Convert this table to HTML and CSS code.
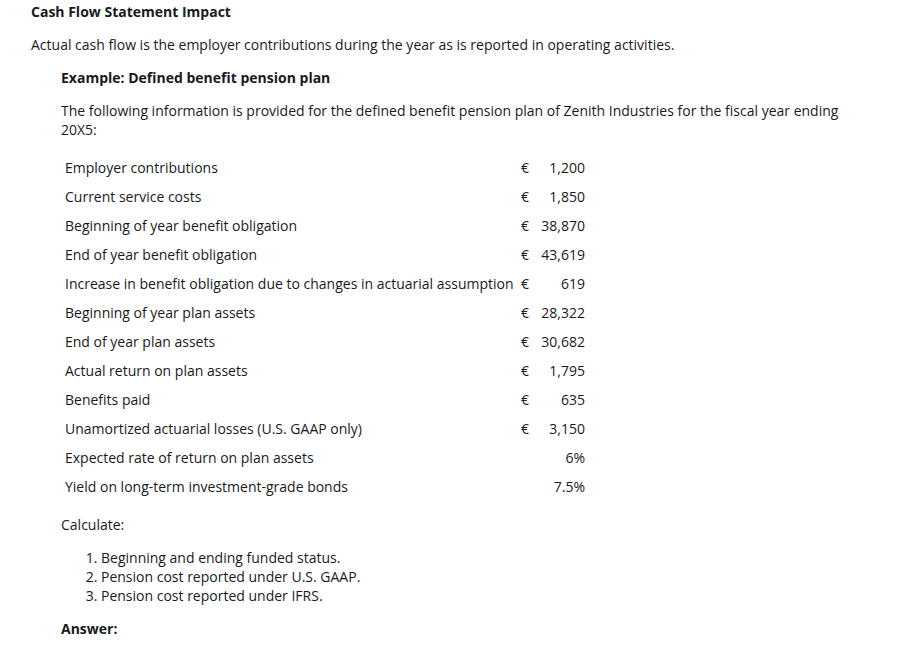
FILE: index.html
```html
<!DOCTYPE html>
<html lang="en">
<head>
<meta charset="utf-8">
<title>Cash Flow Statement Impact</title>
<link rel="stylesheet" href="styles.css">
</head>
<body>
<div class="page">
  <h2 class="title">Cash Flow Statement Impact</h2>
  <p class="lead">Actual cash flow is the employer contributions during the year as is reported in operating activities.</p>
  <section class="example">
    <h3 class="ex-title">Example: Defined benefit pension plan</h3>
    <p class="intro">The following information is provided for the defined benefit pension plan of Zenith Industries for the fiscal year ending 20X5:</p>
    <table class="data">
      <colgroup><col class="c-label"><col class="c-cur"><col class="c-num"></colgroup>
      <tbody>
        <tr><td>Employer contributions</td><td class="cur">€</td><td class="num">1,200</td></tr>
        <tr><td>Current service costs</td><td class="cur">€</td><td class="num">1,850</td></tr>
        <tr><td>Beginning of year benefit obligation</td><td class="cur">€</td><td class="num">38,870</td></tr>
        <tr><td>End of year benefit obligation</td><td class="cur">€</td><td class="num">43,619</td></tr>
        <tr><td>Increase in benefit obligation due to changes in actuarial assumption</td><td class="cur">€</td><td class="num">619</td></tr>
        <tr><td>Beginning of year plan assets</td><td class="cur">€</td><td class="num">28,322</td></tr>
        <tr><td>End of year plan assets</td><td class="cur">€</td><td class="num">30,682</td></tr>
        <tr><td>Actual return on plan assets</td><td class="cur">€</td><td class="num">1,795</td></tr>
        <tr><td>Benefits paid</td><td class="cur">€</td><td class="num">635</td></tr>
        <tr><td>Unamortized actuarial losses (U.S. GAAP only)</td><td class="cur">€</td><td class="num">3,150</td></tr>
        <tr><td>Expected rate of return on plan assets</td><td class="cur"></td><td class="num">6%</td></tr>
        <tr><td>Yield on long-term investment-grade bonds</td><td class="cur"></td><td class="num">7.5%</td></tr>
      </tbody>
    </table>
    <p class="calc">Calculate:</p>
    <ol class="tasks">
      <li>Beginning and ending funded status.</li>
      <li>Pension cost reported under U.S. GAAP.</li>
      <li>Pension cost reported under IFRS.</li>
    </ol>
    <p class="answer">Answer:</p>
  </section>
</div>
</body>
</html>
```

FILE: styles.css
```css
html, body {
  margin: 0;
  padding: 0;
  background: #ffffff;
}
body {
  font-family: "Open Sans", "Liberation Sans", sans-serif;
  font-size: 14px;
  line-height: 19px;
  color: #1a1a1a;
}
.page {
  padding: 2px 0 0 31px;
}
.title {
  margin: 0;
  font-size: 14px;
  font-weight: 700;
  line-height: 19px;
}
.lead {
  margin: 14px 0 0;
}
.example {
  margin-left: 30px;
}
.ex-title {
  margin: 14px 0 0;
  font-size: 14px;
  font-weight: 700;
  line-height: 19px;
}
.intro {
  margin: 14px 0 0;
  max-width: 790px;
}
.data {
  margin-top: 13.5px;
  border-collapse: collapse;
  table-layout: fixed;
  width: 528px;
}
.c-label { width: 456px; }
.c-cur { width: 14px; }
.c-num { width: 58px; }
.data td {
  padding: 5px 4px;
  line-height: 19px;
  white-space: nowrap;
  vertical-align: middle;
}
.data td.cur {
  padding: 5px 0 5px 4px;
}
.data td.num {
  text-align: right;
}
.calc {
  margin: 14px 0 0;
}
.tasks {
  margin: 14px 0 0;
  padding-left: 40px;
}
.answer {
  margin: 14px 0 0;
  font-weight: 700;
}
```
